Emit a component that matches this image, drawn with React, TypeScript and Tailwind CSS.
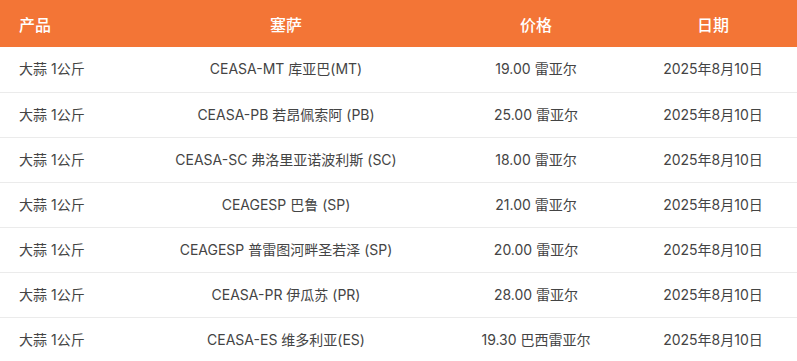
import React from 'react';

const rows = [
  { product: '大蒜 1公斤', ceasa: 'CEASA-MT 库亚巴(MT)', price: '19.00 雷亚尔', date: '2025年8月10日' },
  { product: '大蒜 1公斤', ceasa: 'CEASA-PB 若昂佩索阿 (PB)', price: '25.00 雷亚尔', date: '2025年8月10日' },
  { product: '大蒜 1公斤', ceasa: 'CEASA-SC 弗洛里亚诺波利斯 (SC)', price: '18.00 雷亚尔', date: '2025年8月10日' },
  { product: '大蒜 1公斤', ceasa: 'CEAGESP 巴鲁 (SP)', price: '21.00 雷亚尔', date: '2025年8月10日' },
  { product: '大蒜 1公斤', ceasa: 'CEAGESP 普雷图河畔圣若泽 (SP)', price: '20.00 雷亚尔', date: '2025年8月10日' },
  { product: '大蒜 1公斤', ceasa: 'CEASA-PR 伊瓜苏 (PR)', price: '28.00 雷亚尔', date: '2025年8月10日' },
  { product: '大蒜 1公斤', ceasa: 'CEASA-ES 维多利亚(ES)', price: '19.30 巴西雷亚尔', date: '2025年8月10日' },
];

export default function App() {
  return (
    <div className="w-[797px] h-[361px] overflow-hidden bg-white font-['Inter','Noto_Sans_CJK_SC',sans-serif]">
      <table className="w-full table-fixed border-collapse">
        <colgroup>
          <col className="w-[129px]" />
          <col className="w-[314px]" />
          <col className="w-[186px]" />
          <col />
        </colgroup>
        <thead>
          <tr className="bg-[#f37536] text-white text-base h-[47px]">
            <th className="pl-[19px] pt-[2px] text-left font-medium">产品</th>
            <th className="pt-[2px] text-center font-medium">塞萨</th>
            <th className="pt-[2px] text-center font-medium">价格</th>
            <th className="pt-[2px] text-center font-medium">日期</th>
          </tr>
        </thead>
        <tbody className="text-sm text-[#444]">
          {rows.map((r, i) => (
            <tr key={i} className="h-[45px] border-b border-[#ebebeb]">
              <td className="pl-[19px] text-left">{r.product}</td>
              <td className="text-center">{r.ceasa}</td>
              <td className="text-center">{r.price}</td>
              <td className="text-center">{r.date}</td>
            </tr>
          ))}
        </tbody>
      </table>
    </div>
  );
}
